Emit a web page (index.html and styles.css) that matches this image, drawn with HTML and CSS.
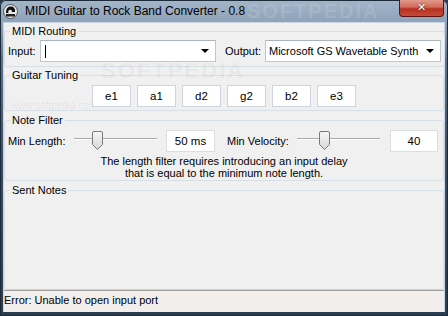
FILE: index.html
```html
<!doctype html>
<html lang="en">

<head>
    <meta charset="UTF-8">
    <link rel="stylesheet" href="styles.css">
    <title>MIDI Guitar to Rock Band Converter - 0.8</title>
</head>

<body>
    <div class="window">
        <div class="titlebar">
            <svg class="app-icon" width="15" height="15" viewBox="0 0 15 15">
                <circle cx="7.5" cy="7.5" r="7" fill="#e8e8e8" stroke="#555" stroke-width="1"/>
                <path d="M3 9 C3 4 5 2.5 8 2.5 C11 2.5 12.5 5 12 8 L9 8 C9 6.5 8 5.5 6.5 6 C5 6.5 5 8 5.5 9 Z" fill="#111"/>
                <rect x="3" y="10" width="9" height="2.5" fill="#222"/>
            </svg>
            <span class="title">MIDI Guitar to Rock Band Converter - 0.8</span>
            <span class="watermark">SOFTPEDIA</span>
            <div class="close">&#x2715;</div>
        </div>
        <div class="client">
            <fieldset class="group routing">
                <legend>MIDI Routing</legend>
                <div class="routing-row">
                    <span class="lbl">Input:</span>
                    <div class="combo"><span class="caret"></span><span class="arrow"></span></div>
                    <span class="lbl out-lbl">Output:</span>
                    <div class="combo"><span class="combo-text">Microsoft GS Wavetable Synth</span><span class="arrow"></span></div>
                </div>
            </fieldset>

            <fieldset class="group tuning">
                <legend>Guitar Tuning</legend>
                <span class="wm-big">SOFTPEDIA</span>
                <div class="strings">
                    <div class="string">e1</div>
                    <div class="string">a1</div>
                    <div class="string">d2</div>
                    <div class="string">g2</div>
                    <div class="string">b2</div>
                    <div class="string">e3</div>
                </div>
                <span class="wm-small">www.softpedia.com</span>
            </fieldset>

            <fieldset class="group filter">
                <legend>Note Filter</legend>
                <div class="filter-row">
                    <span class="lbl len-lbl">Min Length:</span>
                    <div class="slider">
                        <span class="track"></span>
                        <svg class="thumb" style="left: 18px" width="11" height="19" viewBox="0 0 11 19">
                            <defs>
                                <linearGradient id="tg" x1="0" y1="0" x2="0" y2="1">
                                    <stop offset="0" stop-color="#f7f7f7"/>
                                    <stop offset="1" stop-color="#d6d6d6"/>
                                </linearGradient>
                            </defs>
                            <path d="M0.5 2 Q0.5 0.5 2 0.5 H9 Q10.5 0.5 10.5 2 V13.5 L5.5 18.5 L0.5 13.5 Z" fill="url(#tg)" stroke="#7a7a7a"/>
                        </svg>
                    </div>
                    <div class="textbox len-box">50 ms</div>
                    <span class="lbl vel-lbl">Min Velocity:</span>
                    <div class="slider">
                        <span class="track"></span>
                        <svg class="thumb" style="left: 22px" width="11" height="19" viewBox="0 0 11 19">
                            <path d="M0.5 2 Q0.5 0.5 2 0.5 H9 Q10.5 0.5 10.5 2 V13.5 L5.5 18.5 L0.5 13.5 Z" fill="url(#tg)" stroke="#7a7a7a"/>
                        </svg>
                    </div>
                    <div class="textbox vel-box">40</div>
                </div>
                <p class="note">The length filter requires introducing an input delay<br>that is equal to the minimum note length.</p>
            </fieldset>

            <fieldset class="group sent">
                <legend>Sent Notes</legend>
            </fieldset>

            <div class="status">Error: Unable to open input port</div>
        </div>
    </div>
</body>

</html>
```

FILE: styles.css
```css
* {
    box-sizing: border-box;
}

html,
body {
    margin: 0;
}

body {
    width: 448px;
    height: 316px;
    overflow: hidden;
    font-family: "Liberation Sans", Arial, sans-serif;
    font-size: 11px;
    color: #000;
    background: #2b3b4f;
}

/* window frame */
.window {
    height: 316px;
    display: flex;
    flex-direction: column;
    padding: 0 3px 4px 3px;
    background: linear-gradient(180deg, #a3b5c9 0px, #8fa3b9 22px, #5d7188 60px, #3a4d64 160px, #2c3d52 100%);
    box-shadow: inset 0 0 0 1px #1d2a39;
    border-radius: 6px 6px 0 0;
}

.titlebar {
    height: 22px;
    display: flex;
    align-items: center;
    position: relative;
    flex-shrink: 0;
}

.app-icon {
    margin-right: 7px;
    flex-shrink: 0;
}

.title {
    font-size: 12px;
    color: #000;
    white-space: nowrap;
    position: relative;
    z-index: 1;
}

.watermark {
    position: absolute;
    left: 244px;
    top: 0;
    font-size: 20px;
    line-height: 22px;
    font-weight: bold;
    letter-spacing: 2px;
    color: rgba(255, 255, 255, 0.13);
    pointer-events: none;
}

.close {
    margin-left: auto;
    margin-right: 1px;
    align-self: flex-start;
    width: 45px;
    height: 17px;
    border: 1px solid #5b1410;
    border-top: none;
    border-radius: 0 0 4px 4px;
    background: linear-gradient(180deg, #e39a8c 0%, #d06a58 45%, #b5311f 55%, #c64a36 100%);
    color: #fff;
    font-family: "DejaVu Sans", sans-serif;
    font-size: 11px;
    font-weight: bold;
    text-align: center;
    line-height: 15px;
    text-shadow: 0 0 2px #3a0a05;
    position: relative;
    z-index: 1;
}

/* client area */
.client {
    flex: 1;
    display: flex;
    flex-direction: column;
    background: #f0f0f0;
    border: 1px solid #c9d5e1;
    border-bottom: none;
    padding-top: 2px;
}

.group {
    margin: 0;
    border: 1px solid #d5dfe5;
    border-radius: 3px;
    padding: 2px 3px 4px 3px;
    position: relative;
}

.group legend {
    padding: 0 2px;
    margin-left: 2px;
    line-height: 13px;
}

.lbl {
    white-space: nowrap;
}

.routing-row {
    display: grid;
    grid-template-columns: 32px 176px 49px 176px;
    align-items: center;
}

.out-lbl {
    margin-left: 9px;
}

.combo {
    height: 22px;
    background: #fff;
    border: 1px solid #bcc7d2;
    border-top-color: #aab5c1;
    display: flex;
    align-items: center;
    padding-left: 3px;
}

.combo-text {
    white-space: nowrap;
}

.caret {
    width: 1px;
    height: 13px;
    background: #000;
    margin-left: 1px;
}

.arrow {
    margin-left: auto;
    margin-right: 6px;
    width: 0;
    height: 0;
    border-left: 4px solid transparent;
    border-right: 4px solid transparent;
    border-top: 4px solid #000;
}

/* tuning */
.tuning {
    margin-top: 2px;
    padding: 3px;
}

.strings {
    display: flex;
    justify-content: center;
    gap: 6px;
    position: relative;
    z-index: 1;
}

.string {
    width: 39px;
    height: 22px;
    background: #fff;
    border: 1px solid #ccd5dd;
    text-align: center;
    line-height: 20px;
    font-size: 11.5px;
}

.wm-big {
    position: absolute;
    left: 96px;
    top: -24px;
    font-size: 22px;
    font-weight: bold;
    letter-spacing: 2px;
    color: rgba(0, 0, 0, 0.05);
    pointer-events: none;
}

.wm-small {
    position: absolute;
    left: 6px;
    top: 18px;
    font-size: 10px;
    color: rgba(0, 0, 0, 0.08);
    pointer-events: none;
}

/* note filter */
.filter {
    margin-top: 3px;
    padding: 3px 3px 1px 3px;
}

.filter-row {
    display: flex;
    align-items: center;
    height: 22px;
}

.len-lbl {
    width: 66px;
}

.vel-lbl {
    width: 70px;
    margin-left: 12px;
}

.slider {
    width: 83px;
    height: 22px;
    position: relative;
}

.track {
    position: absolute;
    left: 0;
    right: 0;
    top: 8px;
    height: 2px;
    border-top: 1px solid #a9a9a9;
    border-bottom: 1px solid #fff;
}

.thumb {
    position: absolute;
    top: 1px;
}

.textbox {
    height: 22px;
    background: #fff;
    border: 1px solid #d9dfe5;
    text-align: center;
    line-height: 20px;
    font-size: 11.5px;
}

.len-box {
    width: 49px;
    margin-left: 9px;
}

.vel-box {
    width: 48px;
    margin-left: 10px;
}

.note {
    margin: 3px 0 0 0;
    text-align: center;
    line-height: 12px;
}

/* sent notes */
.sent {
    margin-top: 3px;
    flex: 1;
    border-bottom-color: #c8ced4;
}

.status {
    height: 22px;
    flex-shrink: 0;
    border-top: 1px solid #a0a0a0;
    background: #f1eeec;
    padding-top: 3px;
    white-space: nowrap;
}
```
